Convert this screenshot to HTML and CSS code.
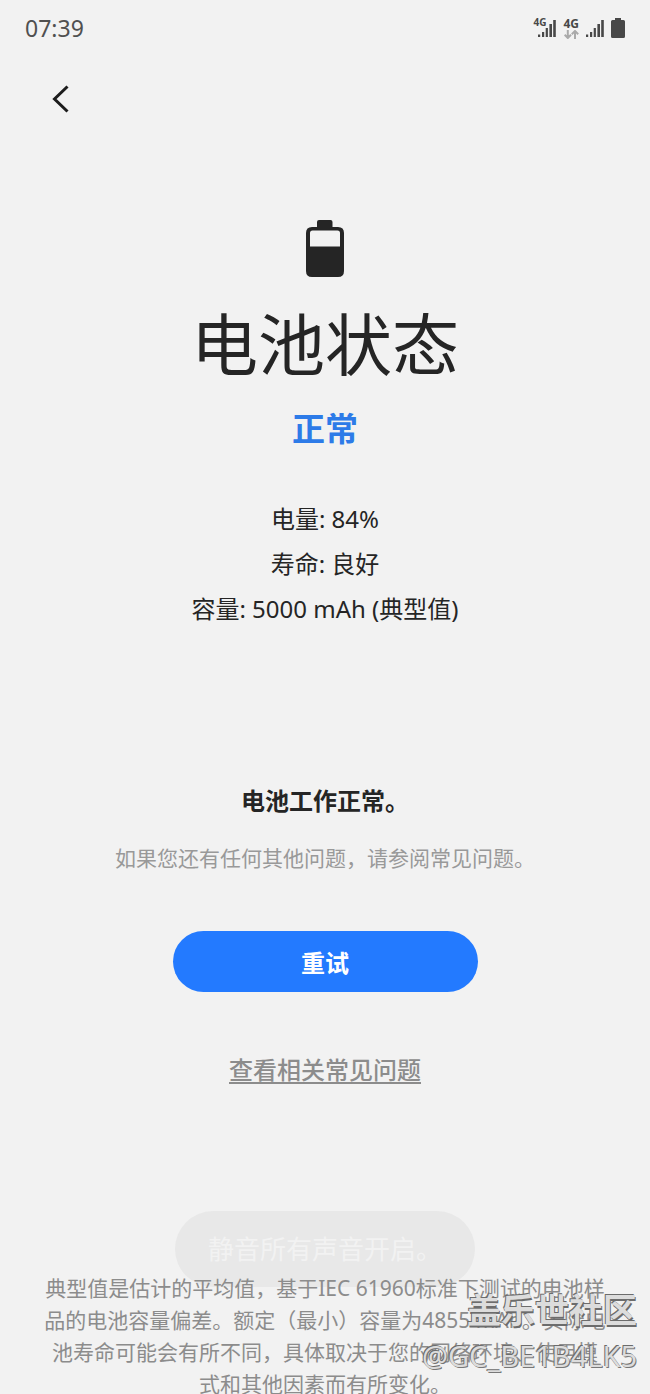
FILE: index.html
```html
<!DOCTYPE html>
<html lang="zh-CN">
<head>
<meta charset="utf-8">
<meta name="viewport" content="width=device-width, initial-scale=1">
<title>电池状态</title>
<link rel="stylesheet" href="styles.css">
</head>
<body>
<div class="screen">
  <header class="status-bar">
    <time class="clock">07:39</time>
    <div class="status-icons">
      <span class="sim">
        <span class="sim-label">4G</span>
        <svg class="signal" width="18" height="18" viewBox="0 0 18 18" aria-hidden="true"><path d="M0 15.500h2.200v2.500H0zM4 13h2.200v5H4zM7.700 9h2.200v9H7.700zM11.400 5h2.600v13h-2.600zM15.200 1h2.600v17h-2.600z"/></svg>
      </span>
      <span class="data">
        <span class="data-label">4G</span>
        <svg class="arrows" width="15" height="9" viewBox="0 0 15 9" aria-hidden="true"><path d="M3.800 0v8M.6 4.800 3.800 8 7 4.800M11 9V1M7.800 4.200 11 1l3.200 3.200"/></svg>
      </span>
      <svg class="signal" width="18" height="18" viewBox="0 0 18 18" aria-hidden="true"><path d="M0 15.500h2.200v2.500H0zM4 13h2.200v5H4zM7.700 9h2.200v9H7.700zM11.400 5h2.600v13h-2.600zM15.200 1h2.600v17h-2.600z"/></svg>
      <svg class="battery-small" width="14" height="20" viewBox="0 0 14 20" aria-hidden="true"><path d="M4 0h6v2h2.500Q14 2 14 3.500v15q0 1.500-1.500 1.500h-11Q0 20 0 18.500v-15Q0 2 1.500 2H4z"/></svg>
    </div>
  </header>

  <nav class="toolbar">
    <button class="back" type="button" aria-label="返回">
      <svg width="18" height="28" viewBox="0 0 18 28" aria-hidden="true"><path d="M15.500 1.500 2.500 14l13 12.500"/></svg>
    </button>
  </nav>

  <main class="content">
    <svg class="battery" width="38" height="58" viewBox="0 0 38 58" aria-hidden="true">
      <path fill-rule="evenodd" d="M13 0h11.500q2 0 2 2v5H32q6 0 6 6v38q0 6-6 6H6q-6 0-6-6V13q0-6 6-6h5V2q0-2 2-2zM6.500 10.500q-2.500 0-2.500 2.500v13.500h30V13q0-2.500-2.500-2.500z"/>
    </svg>
    <h1 class="title">电池状态</h1>
    <p class="state">正常</p>
    <ul class="details">
      <li>电量: 84%</li>
      <li>寿命: 良好</li>
      <li>容量: 5000 mAh (典型值)</li>
    </ul>
    <h2 class="result">电池工作正常。</h2>
    <p class="hint">如果您还有任何其他问题，请参阅常见问题。</p>
    <button class="retry" type="button">重试</button>
    <a class="faq" href="#">查看相关常见问题</a>
  </main>

  <footer class="footer">
    <div class="toast" role="status">静音所有声音开启。</div>
    <p class="note">典型值是估计的平均值，基于IEC 61960标准下测试的电池样品的电池容量偏差。额定（最小）容量为4855 mAh。实际电池寿命可能会有所不同，具体取决于您的网络环境、使用模式和其他因素而有所变化。</p>
    <div class="watermark">
      <span class="watermark-name">盖乐世社区</span>
      <span class="watermark-user">@GC_BE1B4LK5</span>
    </div>
  </footer>
</div>
</body>
</html>
```
FILE: styles.css
```css
* {
  box-sizing: border-box;
  margin: 0;
  padding: 0;
}

html {
  background: #f2f2f2;
}

body {
  background: #f2f2f2;
  color: #252525;
  font-family: "Noto Sans", "Noto Sans CJK SC", sans-serif;
  height: 100vh;
  overflow: hidden;
}

.screen {
  display: flex;
  flex-direction: column;
}

.status-bar {
  display: flex;
  align-items: center;
  justify-content: space-between;
  height: 56px;
  padding: 0 25px;
}

.clock {
  color: #505050;
  font-size: 23px;
  line-height: 32px;
}

.status-icons {
  display: flex;
  align-items: center;
  gap: 7px;
  fill: #484848;
  color: #484848;
}

.sim {
  position: relative;
  display: flex;
  padding-left: 5px;
}

.sim-label {
  position: absolute;
  left: 0;
  top: -3px;
  font-size: 10px;
  font-weight: 700;
  line-height: 12px;
}

.data {
  display: flex;
  flex-direction: column;
  align-items: center;
}

.data-label {
  font-size: 12px;
  font-weight: 700;
  line-height: 12px;
}

.arrows {
  fill: none;
  stroke: #aaa;
  stroke-width: 2;
}

.toolbar {
  height: 88px;
  padding: 20px 44px;
}

.back {
  display: flex;
  padding: 9px 8px;
  border: 0;
  background: none;
  fill: none;
  stroke: #1c1c1c;
  stroke-width: 3;
}

.content {
  display: flex;
  flex-direction: column;
  align-items: center;
  padding: 76px 24px 0;
  text-align: center;
}

.battery {
  fill: #252525;
}

.title {
  margin-top: 22px;
  font-size: 67px;
  font-weight: 400;
  line-height: 88px;
}

.state {
  margin-top: 17px;
  color: #2d7be8;
  font-size: 33px;
  font-weight: 700;
  line-height: 48px;
}

.details {
  margin-top: 43px;
  font-size: 24px;
  line-height: 45px;
  list-style: none;
}

.result {
  margin-top: 152px;
  font-size: 24px;
  font-weight: 700;
  line-height: 36px;
}

.hint {
  margin-top: 23px;
  color: #999;
  font-size: 21px;
  line-height: 32px;
}

.retry {
  width: 100%;
  max-width: 305px;
  height: 61px;
  margin-top: 57px;
  border: 0;
  border-radius: 31px;
  background: #237aff;
  color: #fff;
  font: inherit;
  font-size: 24px;
  font-weight: 700;
}

.faq {
  margin-top: 60px;
  color: #8c8c8c;
  font-size: 24px;
  font-weight: 500;
  line-height: 36px;
  text-decoration: underline;
  text-decoration-thickness: 2px;
  text-underline-offset: 3px;
}

.footer {
  position: relative;
  margin-top: 184px;
  padding: 0 42px;
}

.toast {
  position: absolute;
  top: -61px;
  left: 50%;
  transform: translateX(-50%);
  padding: 19px 33px;
  border-radius: 38px;
  background: #e8e8e8;
  color: #f2f2f2;
  font-size: 26px;
  line-height: 38px;
  white-space: nowrap;
}

.note {
  position: relative;
  color: #8c8c8c;
  font-size: 21px;
  line-height: 32px;
  text-align: center;
}

.watermark {
  position: absolute;
  top: 16px;
  right: 13px;
  display: flex;
  flex-direction: column;
  align-items: flex-end;
  color: #dcdcdc;
}

.watermark-name {
  font-size: 34px;
  font-weight: 700;
  line-height: 44px;
  text-shadow: -1px -1px #6c6c6c, 1px 2px #6c6c6c;
}

.watermark-user {
  font-size: 29px;
  line-height: 48px;
  text-shadow: -1px -1px #6c6c6c, 1px 1px #777;
}
```
